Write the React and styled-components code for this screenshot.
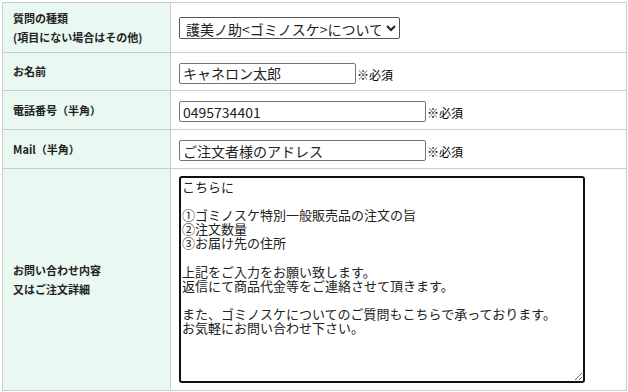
import React from 'react';
import styled, { createGlobalStyle } from 'styled-components';

const GlobalStyle = createGlobalStyle`
  body {
    margin: 0;
    background: #fff;
    font-family: "Noto Sans CJK JP", "Noto Sans", sans-serif;
    color: #000;
  }
`;

const Wrapper = styled.div`
  padding: 2px 2px 0 2px;
`;

const FormTable = styled.table`
  width: 625px;
  border-collapse: collapse;
  table-layout: fixed;
`;

const Row = styled.tr`
  height: ${(p) => p.h}px;
`;

const Label = styled.th`
  width: 168px;
  box-sizing: border-box;
  background: #e9f8f1;
  border: 1px solid #cccccc;
  padding: 0 8px 0 10px;
  text-align: left;
  font-size: 11px;
  font-weight: bold;
  line-height: 19px;
  color: #222;
`;

const Field = styled.td`
  border: 1px solid #cccccc;
  padding: 0 0 0 8px;
  vertical-align: middle;
`;

const Select = styled.select`
  width: 221px;
  height: 22px;
  font-family: "Noto Sans CJK JP", sans-serif;
  font-size: 14px;
  color: #222;
  border: 1px solid #555;
  border-radius: 2px;
  padding: 0 2px;
  background: #fff;
`;

const Input = styled.input`
  box-sizing: border-box;
  width: ${(p) => p.w}px;
  height: 21px;
  font-family: "Noto Sans CJK JP", sans-serif;
  font-size: 14px;
  color: #222;
  border: 1px solid #767676;
  border-radius: 2px;
  padding: 0 3px;
  vertical-align: middle;
  margin-top: -2px;
`;

const Note = styled.span`
  font-size: 12px;
  vertical-align: middle;
  margin-left: 1px;
`;

const TextArea = styled.textarea`
  display: block;
  box-sizing: border-box;
  width: 406px;
  height: 207px;
  margin: 7px 0 7px 0;
  font-family: "Noto Sans CJK JP", sans-serif;
  font-size: 13px;
  line-height: 14.1px;
  color: #222;
  border: 2px solid #111;
  border-radius: 3px;
  padding: 2px 1px;
  resize: both;
  outline: none;
`;

const message = `こちらに

①ゴミノスケ特別一般販売品の注文の旨
②注文数量
③お届け先の住所

上記をご入力をお願い致します。
返信にて商品代金等をご連絡させて頂きます。

また、ゴミノスケについてのご質問もこちらで承っております。
お気軽にお問い合わせ下さい。`;

export default function App() {
  return (
    <Wrapper>
      <GlobalStyle />
      <FormTable>
        <tbody>
          <Row h={50}>
            <Label>
              質問の種類
              <br />
              (項目にない場合はその他)
            </Label>
            <Field>
              <Select defaultValue="gomi">
                <option value="gomi">護美ノ助&lt;ゴミノスケ&gt;について</option>
                <option value="other">その他</option>
              </Select>
            </Field>
          </Row>
          <Row h={38}>
            <Label>お名前</Label>
            <Field>
              <Input w={177} defaultValue="キャネロン太郎" />
              <Note>※必須</Note>
            </Field>
          </Row>
          <Row h={39}>
            <Label>電話番号（半角）</Label>
            <Field>
              <Input w={247} defaultValue="0495734401" />
              <Note>※必須</Note>
            </Field>
          </Row>
          <Row h={39}>
            <Label>Mail（半角）</Label>
            <Field>
              <Input w={247} defaultValue="ご注文者様のアドレス" />
              <Note>※必須</Note>
            </Field>
          </Row>
          <Row h={222}>
            <Label>
              お問い合わせ内容
              <br />
              又はご注文詳細
            </Label>
            <Field>
              <TextArea defaultValue={message} />
            </Field>
          </Row>
        </tbody>
      </FormTable>
    </Wrapper>
  );
}
